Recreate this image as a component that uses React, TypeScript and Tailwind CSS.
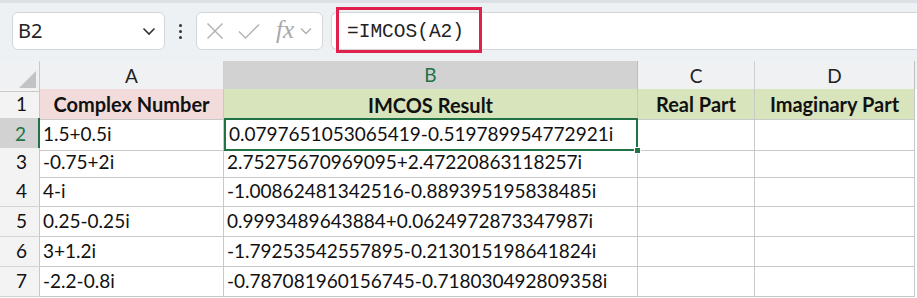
import React from "react";

const rows: [string, string][] = [
  ["1.5+0.5i", "0.0797651053065419-0.519789954772921i"],
  ["-0.75+2i", "2.75275670969095+2.47220863118257i"],
  ["4-i", "-1.00862481342516-0.889395195838485i"],
  ["0.25-0.25i", "0.9993489643884+0.0624972873347987i"],
  ["3+1.2i", "-1.79253542557895-0.213015198641824i"],
  ["-2.2-0.8i", "-0.787081960156745-0.718030492809358i"],
];
const heights = [30, 29, 30, 30, 30, 29];
const cols = "grid-cols-[40px_184px_414px_117px_160px_1fr]";

export default function App() {
  return (
    <div className="w-[917px] h-[298px] overflow-hidden bg-white" style={{ fontFamily: "Lato, sans-serif" }}>
      {/* toolbar */}
      <div className="h-[61px] bg-[#eef1f4] border-t-[3px] border-[#dde1e6] flex items-start pt-[9px]">
        <div className="ml-[12px] w-[153px] h-[38px] bg-white border border-[#d3d6da] rounded-[6px] flex items-center justify-between pl-[5px] pr-[8px]">
          <span className="text-[20px] text-[#222]" style={{ fontFamily: "'Noto Sans', sans-serif" }}>B2</span>
          <svg width="14" height="9" viewBox="0 0 14 9"><path d="M1.5 1.5 L7 7 L12.5 1.5" fill="none" stroke="#333" strokeWidth="1.6" /></svg>
        </div>
        <div className="w-[31px] h-[38px] flex flex-col items-center justify-center gap-[3px]">
          <span className="w-[3px] h-[3px] rounded-full bg-[#333]" />
          <span className="w-[3px] h-[3px] rounded-full bg-[#333]" />
          <span className="w-[3px] h-[3px] rounded-full bg-[#333]" />
        </div>
        <div className="w-[127px] h-[38px] bg-white border border-[#d3d6da] rounded-[6px] flex items-center pl-[9px]">
          <svg width="18" height="18" viewBox="0 0 18 18"><path d="M1.5 1.5 L16.5 16.5 M16.5 1.5 L1.5 16.5" stroke="#b4b4b4" strokeWidth="1.5" fill="none" /></svg>
          <svg className="ml-[14px]" width="22" height="16" viewBox="0 0 22 16"><path d="M1 8.5 L7.5 15 L21 1.5" stroke="#b4b4b4" strokeWidth="1.5" fill="none" /></svg>
          <span className="ml-[16px] text-[25px] italic text-[#a8a8a8] leading-none mt-[-3px]" style={{ fontFamily: "'Liberation Serif', serif" }}>fx</span>
          <svg className="ml-[6px]" width="12" height="8" viewBox="0 0 12 8"><path d="M1 1.5 L6 6.5 L11 1.5" fill="none" stroke="#b0b0b0" strokeWidth="1.4" /></svg>
        </div>
        <div className="ml-[8px] flex-1 h-[38px] bg-white border-y border-l border-[#d3d6da] rounded-l-[6px] relative">
          <div className="absolute left-[4px] top-[-6px] w-[146px] h-[46px] border-[3px] border-[#e0204d]" />
          <span className="absolute left-[15px] top-[5px] text-[19.5px] text-[#222]" style={{ fontFamily: "'Liberation Mono', monospace" }}>=IMCOS(A2)</span>
        </div>
      </div>
      {/* header row */}
      <div className={`grid ${cols} h-[28px] bg-[#eff1f3] text-[19px] text-[#222]`}>
        <div className="border-r border-[#c9c9c9] border-b border-b-[#c9c9c9] relative">
          <svg className="absolute right-[3px] bottom-[3px]" width="17" height="17" viewBox="0 0 17 17"><path d="M17 0 L17 17 L0 17 Z" fill="#c3c3c3" /></svg>
        </div>
        <div className="border-r border-[#d0d0d0] border-b border-b-[#c9c9c9] flex items-center justify-center">A</div>
        <div className="bg-[#d2d2d2] border-r border-[#bdbdbd] border-b-2 border-b-[#217346] flex items-center justify-center text-[#217346]">B</div>
        <div className="border-r border-[#d0d0d0] border-b border-b-[#c9c9c9] flex items-center justify-center">C</div>
        <div className="border-r border-[#c0c0c0] border-b border-b-[#c9c9c9] flex items-center justify-center">D</div>
        <div className="border-b border-b-[#c9c9c9]" />
      </div>
      {/* row 1 */}
      <div className={`grid ${cols} h-[29px] text-[19px] text-[#111]`}>
        <div className="bg-[#f3f3f3] border-r border-[#c9c9c9] border-b border-b-[#d4d4d4] flex items-center justify-end pr-[12px]">1</div>
        <div className="bg-[#f2dcdb] border-r border-b border-[#c9c9c9] flex items-center justify-center font-bold text-[20px]">Complex Number</div>
        <div className="bg-[#d8e4bc] border-r border-[#c9c9c9] border-b-0 flex items-center justify-center font-bold text-[20px]">IMCOS Result</div>
        <div className="bg-[#d8e4bc] border-r border-b border-[#c9c9c9] flex items-center justify-center font-bold text-[20px]">Real Part</div>
        <div className="bg-[#d8e4bc] border-r border-b border-[#c9c9c9] flex items-center justify-center font-bold text-[20px]">Imaginary Part</div>
        <div className="bg-white" />
      </div>
      {rows.map(([a, b], i) => {
        const sel = i === 0;
        return (
          <div key={i} className={`grid ${cols} text-[19px] text-[#111]`} style={{ height: heights[i] }}>
            <div className={`${sel ? "bg-[#d2d2d2] text-[#217346] border-r-2 border-r-[#217346]" : "bg-[#f3f3f3] border-r border-r-[#c9c9c9]"} border-b border-b-[#d4d4d4] flex items-center justify-end pr-[12px]`}>{i + 2}</div>
            <div className="border-r border-b border-[#c9c9c9] flex items-center pl-[3px]">{a}</div>
            <div className={`${sel ? "border-2 border-[#217346] relative" : "border-r border-b border-[#c9c9c9]"} flex items-center pl-[3px]`}>
              {b}
              {sel && <span className="absolute right-[-5px] bottom-[-5px] w-[7px] h-[7px] bg-[#217346] border border-white" />}
            </div>
            <div className="border-r border-b border-[#c9c9c9]" />
            <div className="border-r border-b border-[#c9c9c9]" />
            <div className="bg-white" />
          </div>
        );
      })}
    </div>
  );
}
